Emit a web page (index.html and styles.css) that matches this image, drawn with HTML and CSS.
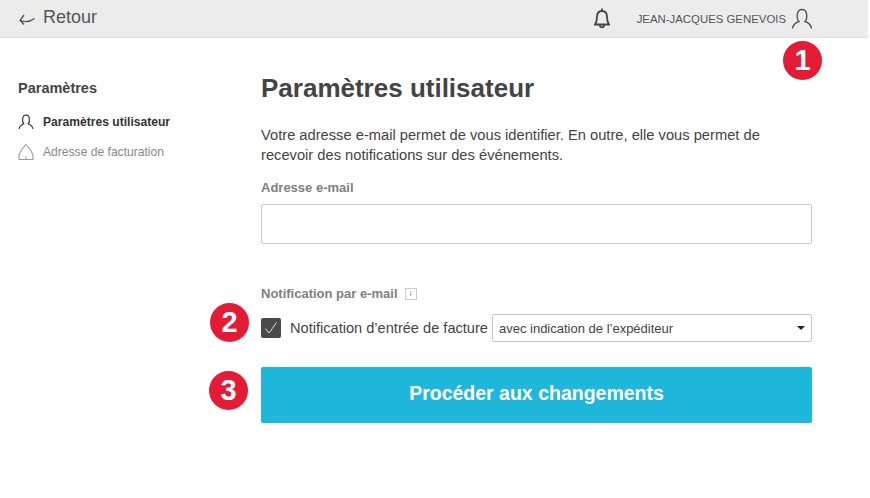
FILE: index.html
```html
<!DOCTYPE html>
<html lang="fr">
<head>
    <meta charset="UTF-8">
    <title>Paramètres utilisateur</title>
    <link rel="stylesheet" href="styles.css">
</head>
<body>

<div class="page">
    <header class="topbar">
        <a class="back">
            <svg class="back-icon" width="16" height="12" viewBox="0 0 16 12"><path d="M5 1 1 6.5 5 10.5M1 6.5C6 8.5 11 8 15.5 4.5" fill="none" stroke="#555" stroke-width="1.3"/></svg>
            Retour
        </a>
        <div class="topbar-right">
            <svg class="bell" width="16" height="21" viewBox="1 0 16 21"><path d="M2 16.5C4 14 3.8 12 4 8.5 4.200 5 6 3 9 3s4.800 2 5 5.500c.2 3.500 0 5.500 2 8ZM9 .5V3M7 17.500c0 2.500 4 2.500 4 0" fill="none" stroke="#444" stroke-width="1.8"/></svg>
            <span class="user-name">JEAN-JACQUES GENEVOIS</span>
            <svg class="user-icon" width="22" height="22" viewBox="0 0 22 22"><path d="M1.5 20.5C2 16.5 5 14.5 8 13.5 6 11.5 6 8 6.5 5.5 7 3 9 1.5 11 1.5s4 1.5 4.5 4C16 8 16 11.500 14 13.500c3 1 6 3 6.500 7" fill="none" stroke="#555" stroke-width="1.4"/></svg>
        </div>
    </header>

    <div class="layout">
        <nav class="sidebar">
            <h3>Paramètres</h3>
            <a class="nav-item active">
                <svg width="16" height="18" viewBox="0 0 22 22"><path d="M1.5 20.5C2 16.5 5 14.5 8 13.5 6 11.5 6 8 6.5 5.5 7 3 9 1.5 11 1.5s4 1.5 4.5 4C16 8 16 11.500 14 13.500c3 1 6 3 6.500 7" fill="none" stroke="#444" stroke-width="1.7"/></svg>
                Paramètres utilisateur
            </a>
            <a class="nav-item">
                <svg width="16" height="18" viewBox="0 0 16 18"><path d="M8 1.5 3.5 7 1 12v4.500h14V12l-2.500-5ZM8 13.500v3" fill="none" stroke="#999" stroke-width="1.1"/></svg>
                Adresse de facturation
            </a>
        </nav>

        <main class="content">
            <h1>Paramètres utilisateur</h1>
            <p class="intro">Votre adresse e-mail permet de vous identifier. En outre, elle vous permet de recevoir des notifications sur des événements.</p>

            <label class="field-label" for="email">Adresse e-mail</label>
            <input class="text-input" type="text" id="email">

            <div class="field-label notif-label">
                Notification par e-mail
                <span class="info-box">i</span>
            </div>

            <div class="notif-row">
                <span class="badge badge-2">2</span>
                <span class="checkbox">
                    <svg width="14" height="14" viewBox="0 0 14 14"><path d="M1.5 7.5 5 12 12.5 1.5" fill="none" stroke="#ddd" stroke-width="1"/></svg>
                </span>
                <span class="notif-text">Notification d’entrée de facture</span>
                <div class="select">
                    <span>avec indication de l’expéditeur</span>
                    <span class="caret"></span>
                </div>
            </div>

            <div class="submit-row">
                <span class="badge badge-3">3</span>
                <button class="submit">Procéder aux changements</button>
            </div>
        </main>
    </div>

    <span class="badge badge-1">1</span>
</div>

</body>
</html>
```

FILE: styles.css
```css
body {
    margin: 0;
    background: #ffffff;
    font-family: "Liberation Sans", Arial, sans-serif;
    color: #444444;
}
.page {
    position: relative;
    width: 868px;
    height: 498px;
    overflow: hidden;
}
.topbar {
    display: flex;
    align-items: center;
    justify-content: space-between;
    box-sizing: border-box;
    height: 38px;
    padding: 0 55px 0 19px;
    background: #ececec;
    border-bottom: 1px solid #e0e0e0;
}
.back {
    display: flex;
    align-items: center;
    gap: 8px;
    font-size: 18px;
    color: #555555;
    margin-top: -3px;
}
.back-icon {
    margin-top: 5px;
}
.topbar-right {
    display: flex;
    align-items: center;
}
.bell {
    margin-right: 27px;
}
.user-name {
    font-size: 11.4px;
    color: #555555;
}
.user-icon {
    margin-left: 5px;
}
.layout {
    display: flex;
}
.sidebar {
    box-sizing: border-box;
    width: 261px;
    padding: 42px 0 0 18px;
}
.sidebar h3 {
    margin: 0 0 16px;
    font-size: 14.5px;
    line-height: 16px;
    font-weight: bold;
    color: #444444;
}
.nav-item {
    display: flex;
    align-items: center;
    gap: 9px;
    height: 20px;
    margin-bottom: 10px;
    font-size: 12.1px;
    color: #888888;
}
.nav-item.active {
    font-weight: bold;
    color: #333333;
}
.content {
    width: 551px;
}
.content h1 {
    margin: 36px 0 0;
    font-size: 26px;
    line-height: 29px;
    font-weight: bold;
    color: #444444;
}
.intro {
    margin: 22px 0 0;
    max-width: 530px;
    font-size: 14.7px;
    line-height: 20px;
    color: #444444;
}
.field-label {
    display: block;
    font-size: 13px;
    line-height: 14px;
    font-weight: bold;
    color: #808080;
}
label.field-label {
    margin-top: 16px;
}
.text-input {
    display: block;
    box-sizing: border-box;
    width: 100%;
    height: 40px;
    margin-top: 9px;
    border: 1px solid #c8c8c8;
    border-radius: 2px;
    background: #ffffff;
}
.notif-label {
    display: flex;
    align-items: center;
    gap: 7px;
    margin-top: 43px;
}
.info-box {
    box-sizing: border-box;
    width: 12px;
    height: 12px;
    border: 1px solid #cccccc;
    font-size: 8px;
    line-height: 10px;
    font-weight: normal;
    text-align: center;
    color: #888888;
}
.notif-row {
    position: relative;
    display: flex;
    align-items: center;
    margin-top: 13px;
}
.checkbox {
    display: flex;
    align-items: center;
    justify-content: center;
    width: 20px;
    height: 20px;
    border-radius: 2px;
    background: #4a4a4c;
}
.notif-text {
    margin-left: 9px;
    font-size: 14.6px;
    color: #444444;
    white-space: nowrap;
}
.select {
    flex: 1;
    display: flex;
    align-items: center;
    justify-content: space-between;
    box-sizing: border-box;
    height: 28px;
    margin-left: 4px;
    padding: 0 6px;
    border: 1px solid #c8c8c8;
    border-radius: 2px;
    font-size: 13px;
    color: #444444;
}
.caret {
    width: 0;
    height: 0;
    border-left: 4px solid transparent;
    border-right: 4px solid transparent;
    border-top: 4px solid #222222;
}
.submit-row {
    position: relative;
    margin-top: 25px;
}
.submit {
    display: block;
    width: 100%;
    height: 56px;
    padding: 0 0 4px;
    border: none;
    border-radius: 2px;
    background: #1fb8dc;
    color: #ffffff;
    font-family: inherit;
    font-size: 19.5px;
    font-weight: bold;
}
/* numbered callouts sit on top of the screen */
.badge {
    position: absolute;
    width: 39px;
    height: 39px;
    border-radius: 50%;
    background: #e31b35;
    color: #ffffff;
    font-size: 29px;
    line-height: 39px;
    font-weight: bold;
    text-align: center;
}
.badge-1 {
    left: 783px;
    top: 41px;
}
.badge-2 {
    left: -51px;
    top: -11px;
}
.badge-3 {
    left: -52px;
    top: 4px;
}
```
